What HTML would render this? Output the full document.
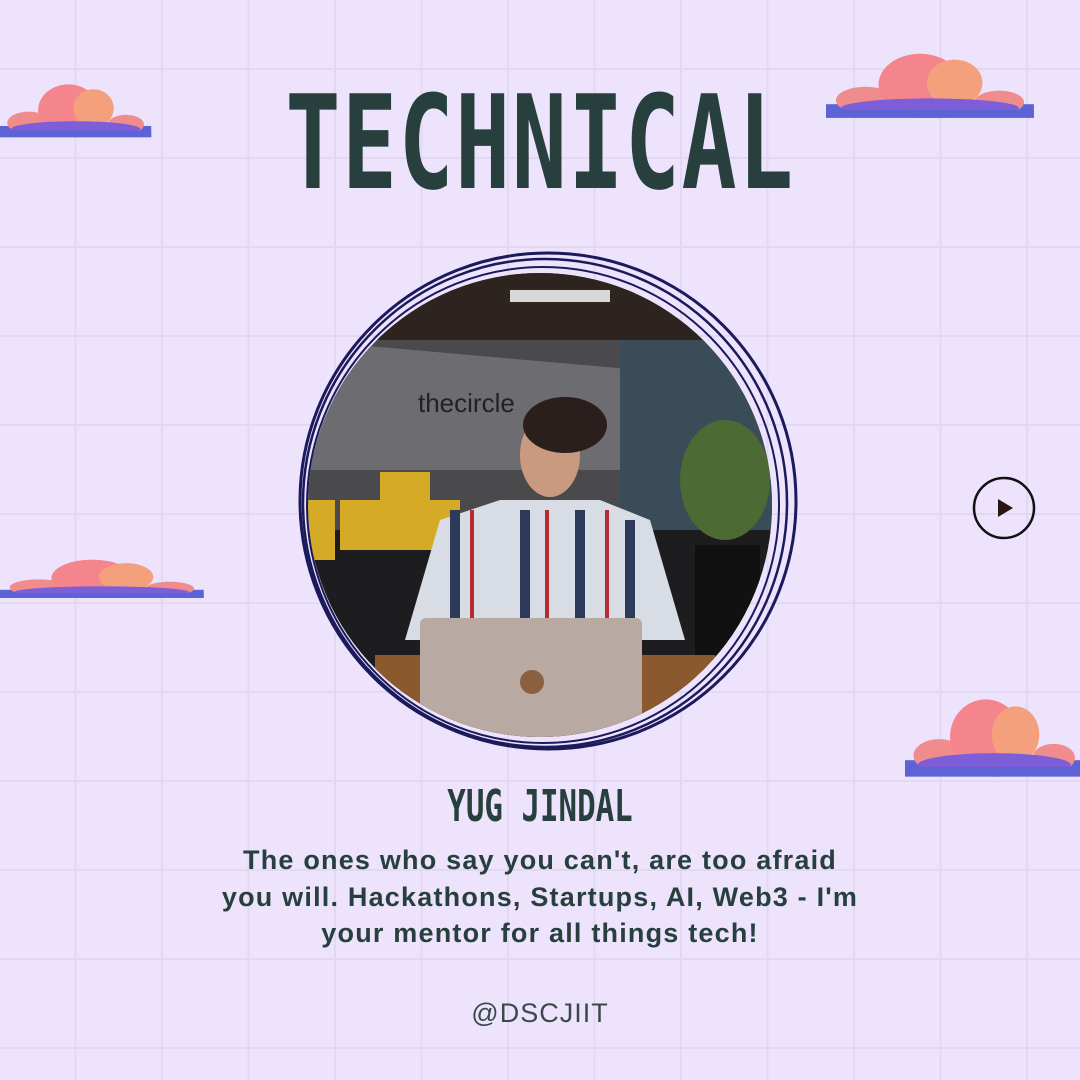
<!DOCTYPE html>
<html><head><style>
html,body{margin:0;padding:0}
body{width:1080px;height:1080px;position:relative;overflow:hidden;background:#ede3fd;
background-image:linear-gradient(#e2d8f2 2px,transparent 2px),linear-gradient(90deg,#e2d8f2 2px,transparent 2px);
background-size:86.5px 89px;background-position:-12px -21px;font-family:"Liberation Sans",sans-serif}
.t{position:absolute;left:0;width:1080px;text-align:center;color:#27403e}
#title{top:78px;font-size:130px;font-weight:bold;letter-spacing:2px;transform:scaleX(.705);transform-origin:540px 0;line-height:130px;font-family:"DejaVu Sans Mono","Liberation Mono",monospace}
#name{top:782px;font-size:44px;font-weight:bold;transform:scaleX(.7);transform-origin:540px 0;line-height:50px;font-family:"DejaVu Sans Mono",monospace}
#bio{top:842px;font-size:27px;font-weight:bold;line-height:36.5px;letter-spacing:1.2px;white-space:nowrap}
#at{top:996px;font-size:27px;line-height:34px;color:#3a4a4a;letter-spacing:1px}
</style></head><body>
<svg width="1080" height="1080" style="position:absolute;left:0;top:0">
<defs>
<clipPath id="c"><circle cx="540" cy="505" r="232"/></clipPath>
<g id="cloud">
<rect x="0" y="60" width="210" height="14" fill="#5b63d6"/>
<ellipse cx="40" cy="56" rx="30" ry="14" fill="#f08c8c"/>
<ellipse cx="175" cy="58" rx="25" ry="12" fill="#f08c8c"/>
<ellipse cx="95" cy="40" rx="42" ry="32" fill="#f5858c"/>
<ellipse cx="130" cy="38" rx="28" ry="24" fill="#f5a07c"/>
<ellipse cx="105" cy="64" rx="90" ry="10" fill="#7c5fd8"/>
<rect x="0" y="66" width="210" height="8" fill="#5b63d6"/>
</g>
</defs>
<use href="#cloud" transform="translate(0,78) scale(0.72,0.8)"/>
<use href="#cloud" transform="translate(826,46) scale(0.99,0.97)"/>
<use href="#cloud" transform="translate(0,555) scale(0.97,0.58)"/>
<use href="#cloud" transform="translate(905,690) scale(0.85,1.17)"/>
<g clip-path="url(#c)">
<rect x="300" y="260" width="480" height="500" fill="#4a4a4c"/>
<rect x="300" y="260" width="480" height="80" fill="#2e241f"/>
<polygon points="300,340 640,370 640,470 300,470" fill="#6d6c70"/>
<rect x="620" y="340" width="160" height="200" fill="#3a4c58"/>
<rect x="300" y="530" width="480" height="230" fill="#1d1c1e"/>
<rect x="510" y="290" width="100" height="12" fill="#d8d8d8"/>
<text x="418" y="412" font-size="26" fill="#222" font-family="Liberation Sans">thecircle</text>
<rect x="340" y="500" width="120" height="50" fill="#d5aa26"/>
<rect x="380" y="472" width="50" height="32" fill="#d5aa26"/>
<rect x="305" y="500" width="30" height="60" fill="#d5aa26"/>
<ellipse cx="725" cy="480" rx="45" ry="60" fill="#4b6a34"/>
<rect x="695" y="545" width="65" height="110" fill="#111"/>
<polygon points="405,640 440,520 500,500 600,500 650,520 685,640" fill="#d8dce4"/>
<rect x="450" y="510" width="10" height="120" fill="#2e3a5c"/><rect x="470" y="510" width="4" height="120" fill="#b62c34"/>
<rect x="520" y="510" width="10" height="120" fill="#2e3a5c"/><rect x="545" y="510" width="4" height="120" fill="#b62c34"/>
<rect x="575" y="510" width="10" height="120" fill="#2e3a5c"/><rect x="605" y="510" width="4" height="120" fill="#b62c34"/>
<rect x="625" y="520" width="10" height="110" fill="#2e3a5c"/>
<ellipse cx="550" cy="455" rx="30" ry="42" fill="#c99a80"/>
<ellipse cx="565" cy="425" rx="42" ry="28" fill="#2a1f1c"/>
<rect x="375" y="655" width="340" height="100" fill="#8a5a2e"/>
<rect x="420" y="618" width="222" height="130" rx="6" fill="#b8aaa2"/>
<ellipse cx="532" cy="682" rx="12" ry="12" fill="#8a6040"/>
</g>
<g fill="none" stroke="#1b1a5a">
<circle cx="548" cy="501" r="248" stroke-width="3"/>
<ellipse cx="545" cy="503" rx="242" ry="244" stroke-width="2.5"/>
<ellipse cx="543" cy="505" rx="236" ry="238" stroke-width="2"/>
</g>
<circle cx="1004" cy="508" r="30" fill="none" stroke="#111" stroke-width="2.5"/>
<polygon points="998,499 998,517 1013,508" fill="#2a1515"/>
</svg>
<div class="t" id="title">TECHNICAL</div>
<div class="t" id="name">YUG JINDAL</div>
<div class="t" id="bio">The ones who say you can't, are too afraid<br>you will. Hackathons, Startups, AI, Web3 - I'm<br>your mentor for all things tech!</div>
<div class="t" id="at">@DSCJIIT</div>
</body></html>
